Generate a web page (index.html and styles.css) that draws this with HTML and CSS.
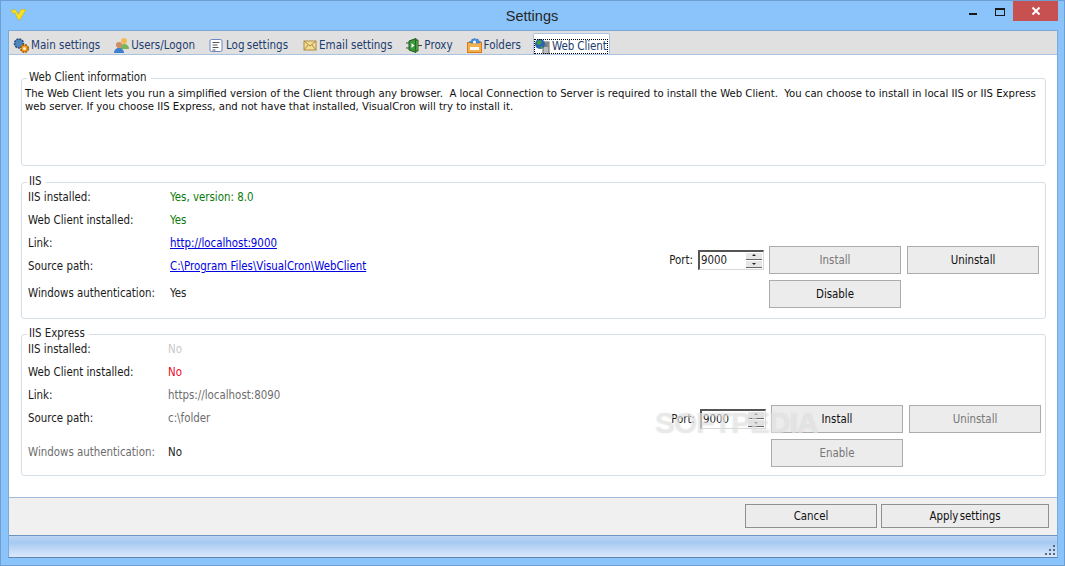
FILE: index.html
```html
<!DOCTYPE html>
<html lang="en">
<head>
<meta charset="utf-8">
<title>Settings</title>
<link rel="stylesheet" href="styles.css">
</head>
<body>
<div class="window">
  <header class="titlebar">
    <svg class="logo" width="15" height="11" viewBox="0 0 15 11"><path d="M0 1.500l4-1 3.500 5L10 .5h5L9 10.500H7L4 4 1.500 4z" fill="#f8e41c" stroke="#d9a400" stroke-width=".5"/></svg>
    <div class="title">Settings</div>
    <div class="controls">
      <span class="min"></span>
      <span class="max"></span>
      <span class="close"><svg width="10" height="10" viewBox="0 0 10 10"><path d="M1.500 1.500l7 7M8.500 1.500l-7 7" stroke="#fff" stroke-width="2"/></svg></span>
    </div>
  </header>
  <div class="client">
    <nav class="tabs">
      <div class="tab"><svg width="17" height="17" viewBox="0 0 17 17"><circle cx="6" cy="6.500" r="4.500" fill="#4f86bd" stroke="#274a75" stroke-width="1.500" stroke-dasharray="2 1"/><circle cx="11.500" cy="11.500" r="3.800" fill="#f09a20" stroke="#9c5a08" stroke-width="1.500" stroke-dasharray="2 1"/><circle cx="11.500" cy="11.500" r="1.500" fill="#fff3d8"/></svg><span>Main settings</span></div>
      <div class="tab"><svg width="17" height="17" viewBox="0 0 17 17"><circle cx="11" cy="4" r="3" fill="#eebb55"/><path d="M7 12c0-3 2-5 4-5s5 1 5 5z" fill="#7cb45a"/><circle cx="6" cy="8" r="3" fill="#cc8e66"/><path d="M1 16c0-3 2-5 5-5s5 2 5 5z" fill="#3f7fd0"/></svg><span>Users/Logon</span></div>
      <div class="tab"><svg width="17" height="15" viewBox="0 0 16 15"><rect x="1.500" y="1.500" width="12" height="12" rx="1.500" fill="#fff" stroke="#6b86c0"/><path d="M4 4.500h7M4 7h5M4 9.500h6M4 12h3" stroke="#555"/></svg><span class="tight">Log settings</span></div>
      <div class="tab"><svg width="16" height="15" viewBox="0 0 15 15"><rect x="1.500" y="3" width="12" height="9" fill="#f6dc92" stroke="#a98c48"/><path d="M1.500 3l6 5 6-5M1.500 12l4-5M13.500 12l-4-5" fill="none" stroke="#a98c48"/></svg><span>Email settings</span></div>
      <div class="tab"><svg width="18" height="17" viewBox="0 0 18 17"><path d="M1 6h3M1 11h3M13 8.500h4" stroke="#444"/><path d="M4 4l7-2.500v14L4 13z" fill="#3a9a38" stroke="#1c5a1c"/><path d="M11 3h2v11h-2z" fill="#8ad06e" stroke="#1c5a1c"/><path d="M6.500 6l3 2.500-3 2.500z" fill="#fff"/></svg><span>Proxy</span></div>
      <div class="tab"><svg width="17" height="17" viewBox="0 0 17 17"><rect x="1.500" y="5.500" width="14" height="10" fill="#f3b04e" stroke="#d9791c"/><rect x="4" y="10" width="9" height="3" fill="#fff"/><path d="M8.500 1l1.500 1.500 2-.5.500 2 2 .5-1 1.500H4.500l-1-1.500 2-.5.500-2 2 .5z" fill="#3f8fe0" stroke="#2a66ac" stroke-width=".5"/><circle cx="8.500" cy="5" r="1.500" fill="#fff"/></svg><span>Folders</span></div>
      <div class="tab active"><div class="focus"><svg width="17" height="17" viewBox="0 0 17 17"><rect x="9" y="4" width="6" height="12" fill="#b9bcc0" stroke="#666"/><path d="M10 6h4M10 8h4" stroke="#444"/><circle cx="6" cy="6" r="5" fill="#2b62b8"/><path d="M3 3l3-1 2 2-2 3-3-1zM7 8l2 1-1 2-2-1z" fill="#3aa23a"/></svg><span>Web Client</span></div></div>
    </nav>
    <main class="page">
      <fieldset class="group info">
        <legend>Web Client information</legend>
        <p class="desc">The Web Client lets you run a simplified version of the Client through any browser.&nbsp; A local Connection to Server is required to install the Web Client.&nbsp; You can choose to install in local IIS or IIS Express<br>web server. If you choose IIS Express, and not have that installed, VisualCron will try to install it.</p>
      </fieldset>
      <fieldset class="group iis">
        <legend>IIS</legend>
        <div class="body">
          <dl class="rows">
            <div class="row"><dt>IIS installed:</dt><dd class="green">Yes, version: 8.0</dd></div>
            <div class="row"><dt>Web Client installed:</dt><dd class="green">Yes</dd></div>
            <div class="row"><dt>Link:</dt><dd><a href="#">http://localhost:9000</a></dd></div>
            <div class="row"><dt>Source path:</dt><dd><a href="#">C:\Program Files\VisualCron\WebClient</a></dd></div>
            <div class="row last"><dt>Windows authentication:</dt><dd>Yes</dd></div>
          </dl>
          <div class="actions">
            <div class="port-row">
              <span class="port-label">Port:</span>
              <div class="spin"><span class="val">9000</span><span class="arrows"><i class="up"></i><i class="down"></i></span></div>
              <button class="btn off">Install</button>
              <button class="btn">Uninstall</button>
            </div>
            <div class="second"><button class="btn">Disable</button></div>
          </div>
        </div>
      </fieldset>
      <fieldset class="group express">
        <legend>IIS Express</legend>
        <div class="body">
          <dl class="rows">
            <div class="row"><dt>IIS installed:</dt><dd class="pale">No</dd></div>
            <div class="row"><dt>Web Client installed:</dt><dd class="red">No</dd></div>
            <div class="row"><dt>Link:</dt><dd class="gray">https://localhost:8090</dd></div>
            <div class="row"><dt>Source path:</dt><dd class="gray">c:\folder</dd></div>
            <div class="row last"><dt class="gray">Windows authentication:</dt><dd>No</dd></div>
          </dl>
          <div class="actions">
            <div class="port-row">
              <span class="port-label">Port:</span>
              <div class="spin"><span class="val">9000</span><span class="arrows"><i class="up"></i><i class="down"></i></span></div>
              <button class="btn">Install</button>
              <button class="btn off">Uninstall</button>
            </div>
            <div class="second"><button class="btn off">Enable</button></div>
          </div>
          <div class="watermark">SOFTPEDIA</div>
        </div>
      </fieldset>
    </main>
    <div class="footer">
      <button class="btn cancel">Cancel</button>
      <button class="btn apply">Apply settings</button>
    </div>
    <div class="status">
      <svg class="grip" width="12" height="12" viewBox="0 0 12 12"><path d="M9 1h2v2H9zM5 5h2v2H5zM9 5h2v2H9zM1 9h2v2H1zM5 9h2v2H5zM9 9h2v2H9z" fill="#5a6a7c"/></svg>
    </div>
  </div>
</div>
</body>
</html>
```
FILE: styles.css
```css
* { box-sizing: border-box; }
html, body { margin: 0; height: 100%; }
body { font: 11.4px/13px "DejaVu Sans Condensed", "DejaVu Sans", Verdana, sans-serif; font-stretch: condensed; color: #111; overflow: hidden; }
.window { width: 1065px; height: 566px; background: #8ac4fa; border: 1px solid #6d9fd2; display: flex; flex-direction: column; padding: 0 6px 7px 7px; }
.titlebar { height: 29px; flex: none; display: flex; align-items: center; position: relative; }
.logo { margin-left: 3px; position: relative; top: -1px; }
.title { position: absolute; left: 0; right: 0; top: 6px; padding-right: 2px; text-align: center; font: 14.5px/18px "Liberation Sans", sans-serif; color: #262626; }
.controls { position: absolute; right: 0; top: 0; display: flex; align-items: flex-start; }
.controls span { display: block; }
.min { width: 8px; height: 2px; background: #1a1a1a; margin: 12px 18px 0 0; }
.max { width: 10px; height: 8px; border: 1px solid #1a1a1a; border-top-width: 2px; margin: 7px 8px 0 0; }
.close { width: 45px; height: 20px; background: #c75050; display: flex !important; align-items: center; justify-content: center; }
.client { flex: 1; display: flex; flex-direction: column; background: #f0f0f0; border: 1px solid #7ea8d8; border-bottom-color: #5f87b5; min-height: 0; }
.tabs { height: 23px; flex: none; background: #e0e0e0; display: flex; align-items: flex-start; padding: 2px 0 0 4px; color: #1c3c6e; font-size: 11.5px; }
.tab { display: flex; align-items: center; gap: 1px; padding-top: 4px; margin-right: 13px; white-space: nowrap; height: 20px; }
.tab svg { flex: none; }
.tab .tight { word-spacing: -1px; padding-right: 1px; }
.tab.active { background: #fff; border: 1px solid #a9c4e0; border-bottom: 0; margin: 0 0 0 -1px; padding: 4px 1px 0 0; height: 22px; border-radius: 2px 2px 0 0; }
.tab.active span { letter-spacing: -.1px; }
.focus { display: flex; align-items: center; gap: 1px; outline: 1px dotted #000; outline-offset: -1px; height: 15px; padding-right: 1px; }
.page { flex: 1; background: #fff; border-top: 1px solid #a9c4e0; padding: 17px 11px 0 12px; display: flex; flex-direction: column; min-height: 0; border-bottom: 1px solid #a0bbdc; }
.group { margin: 0; padding: 0 7px; border: 1px solid #d5dfe8; border-radius: 3px; min-width: 0; position: relative; flex: none; }
.group legend { padding: 0 4px 0 2px; margin-left: -2px; color: #222; line-height: 13px; position: relative; top: -1px; }
.info { height: 94px; }
.desc { margin: 2px 0 0 -4px; color: #111; font-size: 11.25px; line-height: 13px; white-space: nowrap; }
.iis { height: 143px; margin-top: 10px; }
.express { height: 148px; margin-top: 9px; }
.body { display: flex; justify-content: space-between; position: relative; }
.rows { margin: 0 0 0 -1px; width: 400px; padding-top: 2px; }
.row { display: flex; height: 23px; align-items: flex-start; }
.row.last { margin-top: 4px; }
.express .row.last { margin-top: 11px; }
dt { width: 142px; color: #1a1a1a; }
.express dt { width: 140px; }
dd { margin: 0; color: #222; }
.green { color: #0a7a0a; }
.red { color: #ef0a2a; }
.pale { color: #c8c8c8; }
.gray { color: #6d6d6d; }
a { color: #0000e0; }
.actions { margin: 57px -1px 0 0; display: flex; flex-direction: column; align-items: flex-end; width: 372px; }
.express .actions { margin-right: -3px; margin-top: 64px; }
.port-row { display: flex; align-items: center; }
.port-label { color: #222; margin-right: 5px; }
.spin { width: 66px; height: 20px; border: 1px solid #d8d8d8; border-top: 2px solid #555; border-left: 2px solid #555; background: #fff; display: flex; align-items: center; justify-content: space-between; margin-right: 5px; padding-left: 1px; color: #222; }
.arrows { display: flex; flex-direction: column; gap: 1px; margin-right: 1px; }
.arrows i { display: block; width: 16px; height: 7px; background: #e6e6e6; border-bottom: 1px solid #666; position: relative; }
.arrows i::after { content: ""; position: absolute; left: 6px; top: 2px; border: 2px solid transparent; }
.arrows .up::after { border-bottom-color: #222; top: -1px; }
.arrows .down::after { border-top-color: #222; top: 2px; }
.btn { width: 132px; height: 28px; background: #ececec; border: 1px solid #acacac; font: inherit; font-stretch: condensed; color: #111; padding: 0; }
.btn.off { color: #777; }
.port-row .btn + .btn { margin-left: 6px; }
.second { margin: 6px 138px 0 0; }
.watermark { position: absolute; left: 626px; top: 67px; font: 700 30px/30px "Liberation Sans", sans-serif; color: rgba(255, 255, 255, .55); text-shadow: 0 0 1px rgba(120, 120, 120, .35); letter-spacing: -1px; pointer-events: none; }
.footer { height: 37px; flex: none; display: flex; justify-content: flex-end; gap: 4px; padding: 6px 8px 0 0; }
.cancel { width: 132px; height: 24px; border-color: #909090; padding-top: 1px; }
.apply { width: 168px; height: 24px; border-color: #909090; word-spacing: -2px; padding-top: 1px; }
.status { height: 22px; flex: none; border-top: 1px solid #6e94c0; background: linear-gradient(#bcd4f2, #a6c9f2 30%, #dbe9fb); position: relative; }
.grip { position: absolute; right: 1px; bottom: 1px; }
```
